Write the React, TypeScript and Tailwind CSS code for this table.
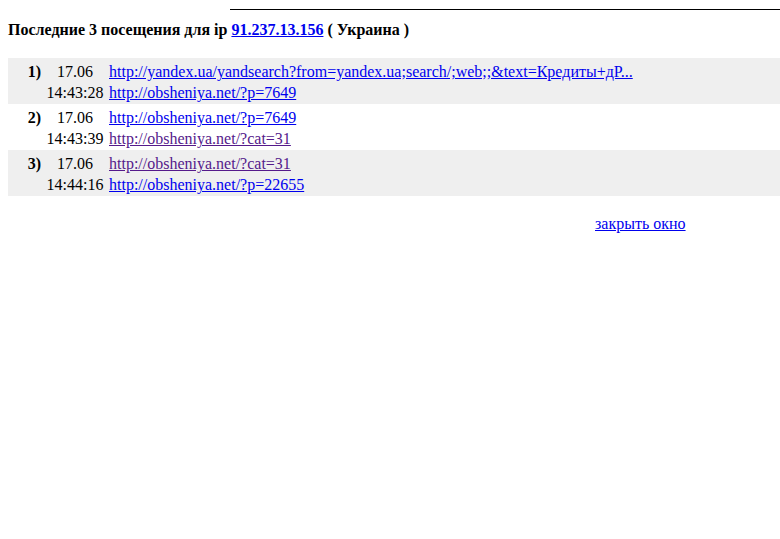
const visits = [
  {
    n: '1)',
    date: '17.06',
    time: '14:43:28',
    from: { href: 'http://yandex.ua/yandsearch?from=yandex.ua;search/;web;;&text=Кредиты+дР...', visited: false },
    to: { href: 'http://obsheniya.net/?p=7649', visited: false },
  },
  {
    n: '2)',
    date: '17.06',
    time: '14:43:39',
    from: { href: 'http://obsheniya.net/?p=7649', visited: false },
    to: { href: 'http://obsheniya.net/?cat=31', visited: true },
  },
  {
    n: '3)',
    date: '17.06',
    time: '14:44:16',
    from: { href: 'http://obsheniya.net/?cat=31', visited: true },
    to: { href: 'http://obsheniya.net/?p=22655', visited: false },
  },
];

function Link({ text, visited }: { text: string; visited: boolean }) {
  return (
    <a
      href="#"
      className={`underline whitespace-nowrap ${visited ? 'text-[#551a8b]' : 'text-[#0000ee]'}`}
    >
      {text}
    </a>
  );
}

export default function App() {
  return (
    <div
      className="min-h-[539px] w-[780px] bg-white text-black text-[16px] overflow-hidden"
      style={{ fontFamily: '"Liberation Serif", "Times New Roman", serif' }}
    >
      {/* top rule */}
      <div className="pt-[9px]">
        <div className="ml-[230px] h-px bg-black" />
      </div>

      <div className="mt-[10px] px-[8px] font-bold leading-[19px]">
        Последние 3 посещения для ip{' '}
        <a href="#" className="text-[#0000ee] underline">91.237.13.156</a> ( Украина )
      </div>

      <div className="mt-[19px] ml-[8px]">
        {visits.map((v, i) => (
          <div
            key={i}
            className={`grid grid-cols-[36px_62px_1fr] h-[46px] pt-[3px] pb-[1px] leading-[21px] ${i % 2 === 0 ? 'bg-[#efefef]' : 'bg-white'}`}
          >
            <div className="text-right pr-[3px] font-bold">{v.n}</div>
            <div className="flex flex-col items-center">
              <span>{v.date}</span>
              <span>{v.time}</span>
            </div>
            <div className="flex flex-col pl-[3px]">
              <div><Link text={v.from.href} visited={v.from.visited} /></div>
              <div><Link text={v.to.href} visited={v.to.visited} /></div>
            </div>
          </div>
        ))}
      </div>

      <div className="mt-[18px] pl-[595px] leading-[19px]">
        <a href="#" className="text-[#0000ee] underline">закрыть окно</a>
      </div>
    </div>
  );
}
